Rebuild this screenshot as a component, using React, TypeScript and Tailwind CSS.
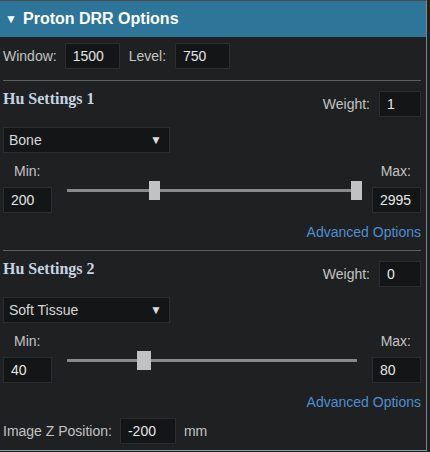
import React from "react";

const sans = "font-['Liberation_Sans',Arial,sans-serif]";

function Input({ value, w }: { value: string; w: string }) {
  return (
    <div
      className={`${w} h-[26px] bg-[#141517] border border-[#2c2d30] flex items-center pl-[7px] text-[14px] text-[#e6e6e6]`}
    >
      {value}
    </div>
  );
}

function Select({ value }: { value: string }) {
  return (
    <div className="w-[167px] h-[26px] bg-[#141517] border border-[#2c2d30] flex items-center justify-between pl-[5px] pr-[7px] text-[14px] text-[#d8d8d8]">
      <span>{value}</span>
      <span className="text-[12px] text-[#dcdcdc]">▼</span>
    </div>
  );
}

function Section({
  title,
  weight,
  select,
  min,
  max,
  thumbs,
}: {
  title: string;
  weight: string;
  select: string;
  min: string;
  max: string;
  thumbs: { left: number; w: number }[];
}) {
  return (
    <div className="border-t border-[#5e5f61] mt-[10px]">
      <div className="flex items-center justify-between mt-[10px] h-[26px]">
        <div className="font-['Liberation_Serif',Georgia,serif] font-bold text-[16px] text-[#c6d5e3] -mt-[10px]">
          {title}
        </div>
        <div className="flex items-center">
          <span className="text-[14px] text-[#c4c4c4] mr-[9px]">Weight:</span>
          <Input value={weight} w="w-[42px]" />
        </div>
      </div>
      <div className="mt-[10px]">
        <Select value={select} />
      </div>
      <div className="flex justify-between h-[16px] mt-[10px] text-[14px] text-[#c4c4c4] leading-[16px]">
        <span className="pl-[11px]">Min:</span>
        <span className="pr-[10px]">Max:</span>
      </div>
      <div className="flex items-center mt-[8px]">
        <Input value={min} w="w-[49px]" />
        <div className="flex-1 h-[26px] px-[15px] flex items-center">
          <div className="relative w-full h-[3px] -mt-[20px] bg-[#8a8a8a]">
            {thumbs.map((t, i) => (
              <div
                key={i}
                className="absolute top-[-8px] h-[19px] bg-[#c2c2c2]"
                style={{ left: t.left, width: t.w }}
              />
            ))}
          </div>
        </div>
        <Input value={max} w="w-[49px]" />
      </div>
      <div className="flex justify-end mt-[11px] h-[16px] leading-[16px] text-[14px] text-[#4d8fd0]">
        Advanced Options
      </div>
    </div>
  );
}

export default function App() {
  return (
    <div className={`w-[430px] h-[452px] bg-[#1f2022] ${sans}`}>
      <div className="w-[427px] h-[451px] bg-[#1f2022] border-t border-r border-b border-t-[#4a4a4a] border-r-[#7d8a92] border-b-[#8d9aa3]">
        <div className="h-[36px] bg-[#2d7599] flex items-center pl-[5px] text-white">
          <span className="text-[12px] w-[18px]">▼</span>
          <span className="font-bold text-[16px]">Proton DRR Options</span>
        </div>
        <div className="pl-[3px] pr-[5px]">
          <div className="flex items-center mt-[6px] h-[26px] text-[14px] text-[#c4c4c4]">
            <span>Window:</span>
            <div className="ml-[8px]">
              <Input value="1500" w="w-[55px]" />
            </div>
            <span className="ml-[9px]">Level:</span>
            <div className="ml-[9px]">
              <Input value="750" w="w-[55px]" />
            </div>
          </div>
          <div className="h-[1px]" />
          <Section
            title="Hu Settings 1"
            weight="1"
            select="Bone"
            min="200"
            max="2995"
            thumbs={[
              { left: 82, w: 11 },
              { left: 284, w: 11 },
            ]}
          />
          <Section
            title="Hu Settings 2"
            weight="0"
            select="Soft Tissue"
            min="40"
            max="80"
            thumbs={[{ left: 70, w: 14 }]}
          />
          <div className="flex items-center mt-[8px] h-[26px] text-[14px] text-[#c4c4c4]">
            <span>Image Z Position:</span>
            <div className="ml-[8px]">
              <Input value="-200" w="w-[56px]" />
            </div>
            <span className="ml-[8px]">mm</span>
          </div>
        </div>
      </div>
    </div>
  );
}
